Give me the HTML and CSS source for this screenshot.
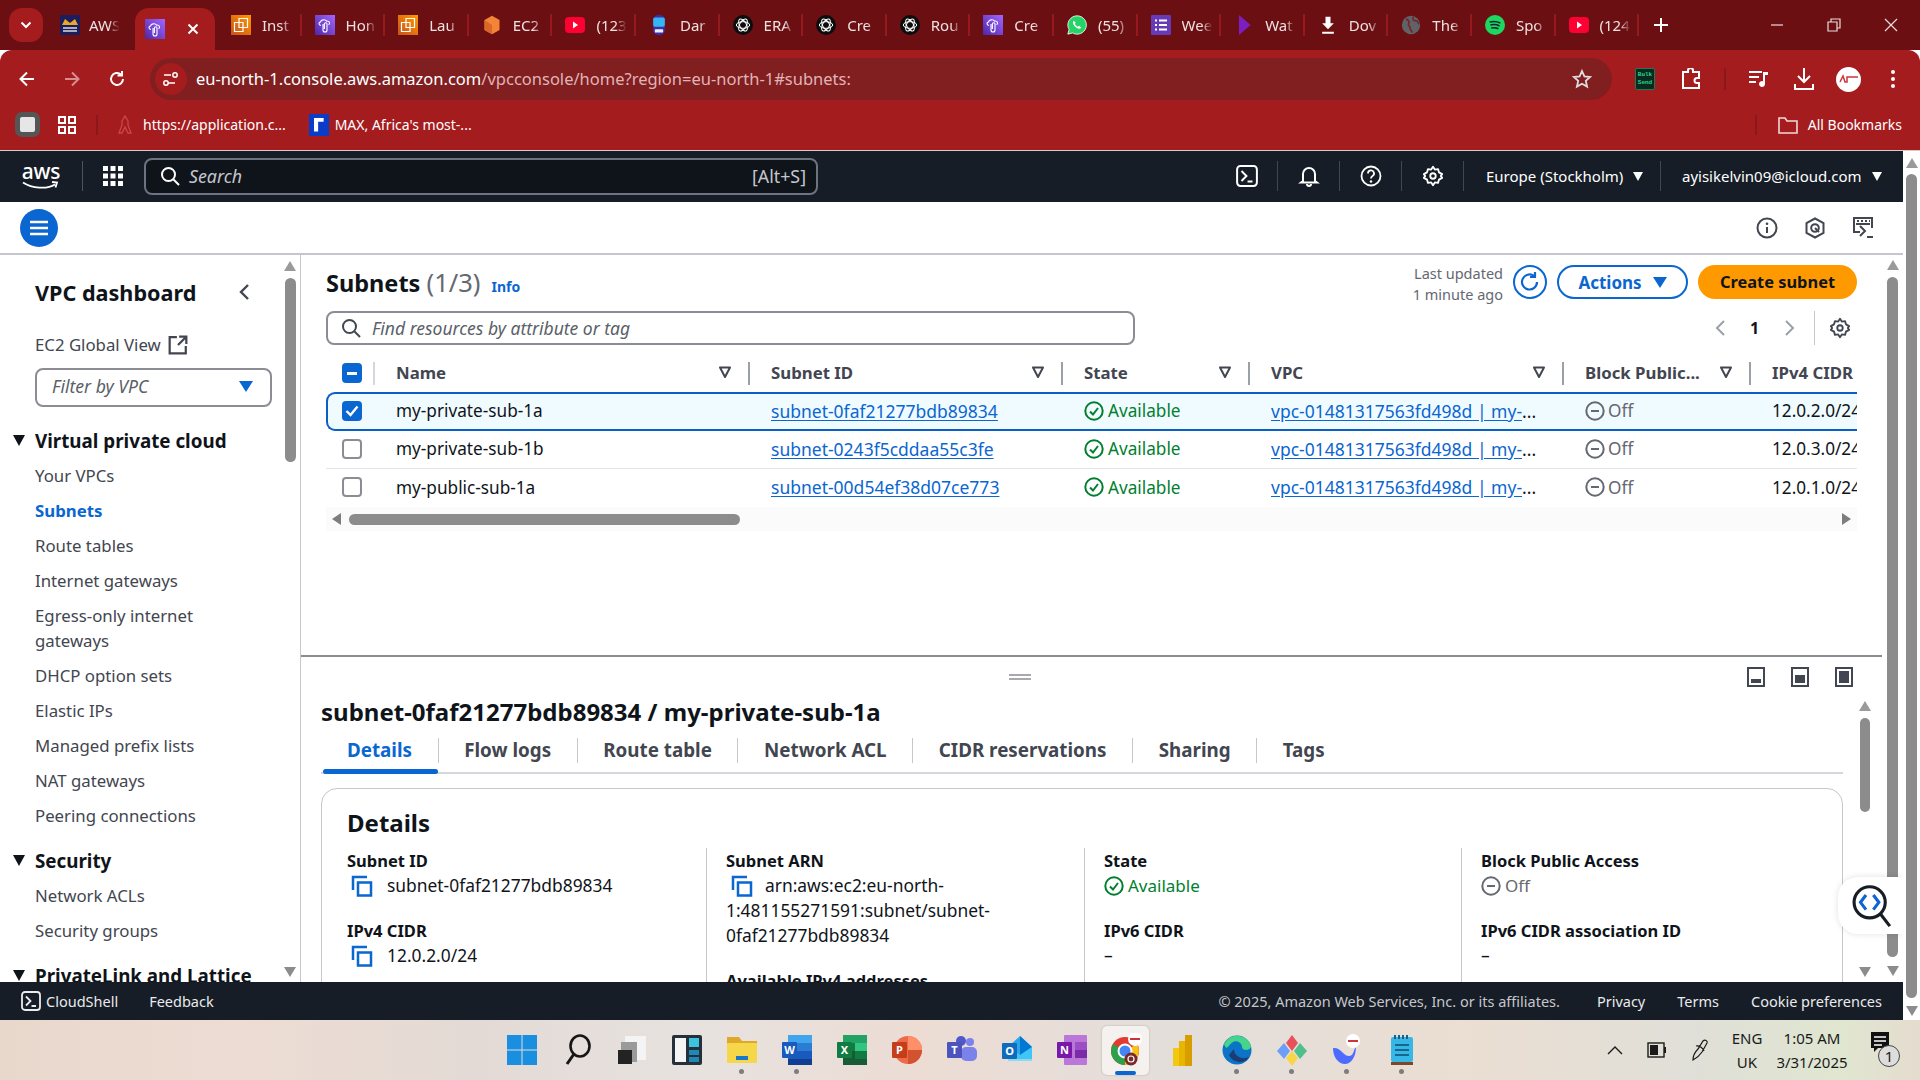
FILE: index.html
```html
<!DOCTYPE html>
<html lang="en">
<head>
<meta charset="utf-8">
<title>Subnets | VPC Console</title>
<link rel="stylesheet" href="styles.css">
</head>
<body>
<svg class="defs" aria-hidden="true">
  <defs>
    <linearGradient id="pg" x1="0" y1="1" x2="1" y2="0"><stop offset="0" stop-color="#4d27a8"/><stop offset="1" stop-color="#a166ff"/></linearGradient>
    <linearGradient id="og" x1="0" y1="1" x2="1" y2="0"><stop offset="0" stop-color="#c8511b"/><stop offset="1" stop-color="#ff9900"/></linearGradient>
    <symbol id="i-cloudapp" viewBox="0 0 20 20"><rect width="20" height="20" fill="url(#pg)"/><path d="M6 10.500c-2.400-.4-2.800-3-.4-3.600.3-2.200 4.600-3 6-.8 2.700-.3 4 2.300 2 3.800M8 9v6a2 2 0 0 0 4 0V9a1.300 1.300 0 0 0-2.600 0v5" fill="none" stroke="#fff" stroke-width="1.100"/></symbol>
    <symbol id="i-ec2app" viewBox="0 0 20 20"><rect width="20" height="20" fill="url(#og)"/><path d="M8 3.500h8.500v9H8zM3.500 7.500H12v9H3.500z" fill="none" stroke="#fff" stroke-width="1.200"/></symbol>
    <symbol id="i-yt" viewBox="0 0 20 20"><rect y="2" width="20" height="16" rx="4" fill="#ff0033"/><path d="M8 6.500v7l5-3.500z" fill="#fff"/></symbol>
    <symbol id="i-gpt" viewBox="0 0 24 24"><circle cx="12" cy="12" r="12" fill="#0d0d0d"/><g fill="none" stroke="#fff" stroke-width="1.200"><ellipse cx="12" cy="12" rx="8" ry="4"/><ellipse cx="12" cy="12" rx="8" ry="4" transform="rotate(60 12 12)"/><ellipse cx="12" cy="12" rx="8" ry="4" transform="rotate(120 12 12)"/></g></symbol>
    <symbol id="i-gear" viewBox="0 0 24 24"><g fill="none" stroke="currentColor" stroke-width="2"><circle cx="12" cy="12" r="3"/><path d="M12 2l2 3 3.500-.5 1 3.500L22 10l-1.500 2 1.500 2-3.500 2-1 3.500L14 19l-2 3-2-3-3.500.5-1-3.500L2 14l1.500-2L2 10l3.500-2 1-3.500L10 5z" stroke-linejoin="round"/></g></symbol>
    <symbol id="i-filter" viewBox="0 0 14 14"><path d="M2 2.500h10L7 12z" fill="none" stroke="currentColor" stroke-width="2" stroke-linejoin="round"/></symbol>
    <symbol id="i-ok" viewBox="0 0 20 20"><circle cx="10" cy="10" r="8.700" fill="none" stroke="currentColor" stroke-width="2"/><path d="M6 10.500l3 3 5-6.500" fill="none" stroke="currentColor" stroke-width="2"/></symbol>
    <symbol id="i-off" viewBox="0 0 20 20"><circle cx="10" cy="10" r="8.700" fill="none" stroke="currentColor" stroke-width="2"/><path d="M6 10h8" stroke="currentColor" stroke-width="2"/></symbol>
    <symbol id="i-copy" viewBox="0 0 22 22"><path d="M7 20.500V7.500h13v13z M2 15V2h14" fill="none" stroke="#0a66d0" stroke-width="2.500"/></symbol>
    <symbol id="i-shell" viewBox="0 0 20 20"><rect x="1" y="1" width="18" height="18" rx="3" fill="none" stroke="currentColor" stroke-width="1.800"/><path d="M5 5.500l4.500 4.500L5 14.500M10.500 15H15" fill="none" stroke="currentColor" stroke-width="1.800"/></symbol>
  </defs>
</svg>

<header class="tabstrip">
  <button class="tab-menu"><svg width="12" height="8" viewBox="0 0 12 8"><path d="M1.500 1.500L6 6l4.500-4.500" fill="none" stroke="#fff" stroke-width="2"/></svg></button>
  <div class="tab tab-first">
    <svg class="fav" viewBox="0 0 20 20"><rect width="20" height="20" fill="#1c1d5c"/><path d="M2 10l3-6 5 4 5-4 3 6z" fill="#e9a82a"/><path d="M3 13h14M3 16h14" stroke="#ddd" stroke-width="1.300"/></svg>
    <span class="tab-title">AWS</span>
  </div>
  <div class="tab tab-active">
    <svg class="fav"><use href="#i-cloudapp"/></svg>
    <svg class="tab-close" width="12" height="12" viewBox="0 0 12 12"><path d="M1.500 1.500l9 9m0-9l-9 9" stroke="#fff" stroke-width="2"/></svg>
  </div>
  <div class="tab"><svg class="fav"><use href="#i-ec2app"/></svg><span class="tab-title">Inst</span></div>
  <div class="tab"><svg class="fav"><use href="#i-cloudapp"/></svg><span class="tab-title">Hon</span></div>
  <div class="tab"><svg class="fav"><use href="#i-ec2app"/></svg><span class="tab-title">Lau</span></div>
  <div class="tab"><svg class="fav" viewBox="0 0 20 24"><path d="M10 1l9 5v12l-9 5-9-5V6z" fill="#f58536"/><path d="M10 12v11l-9-5V6z" fill="#d9672a"/></svg><span class="tab-title">EC2</span></div>
  <div class="tab"><svg class="fav" viewBox="0 0 20 20"><use href="#i-yt"/></svg><span class="tab-title">(123</span></div>
  <div class="tab"><svg class="fav" viewBox="0 0 20 24"><rect x="3" y="0" width="14" height="24" rx="6" fill="#3d2fa8"/><rect x="3" y="3" width="14" height="11" rx="2" fill="#35b5f2"/><rect x="5" y="17" width="10" height="4" rx="1" fill="#e8f0ff"/></svg><span class="tab-title">Dar</span></div>
  <div class="tab"><svg class="fav" viewBox="0 0 24 24"><use href="#i-gpt"/></svg><span class="tab-title">ERA</span></div>
  <div class="tab"><svg class="fav" viewBox="0 0 24 24"><use href="#i-gpt"/></svg><span class="tab-title">Cre</span></div>
  <div class="tab"><svg class="fav" viewBox="0 0 24 24"><use href="#i-gpt"/></svg><span class="tab-title">Rou</span></div>
  <div class="tab"><svg class="fav"><use href="#i-cloudapp"/></svg><span class="tab-title">Cre</span></div>
  <div class="tab"><svg class="fav" viewBox="0 0 24 24"><path d="M12 1a11 11 0 0 0-9.500 16.500L1 23l5.700-1.500A11 11 0 1 0 12 1z" fill="#25d366" stroke="#fff" stroke-width="1"/><path d="M8 7c-2 2 0 6 3 8s5 2 6 0l-2.500-2-1.500 1c-1.500-.5-3-2-3.500-3.500l1-1.500z" fill="#fff"/></svg><span class="tab-title">(55)</span></div>
  <div class="tab"><svg class="fav" viewBox="0 0 20 20"><rect width="20" height="20" rx="1" fill="#673ab7"/><path d="M8 5.500h8M8 10h8M8 14.500h8M4 5.500h2M4 10h2M4 14.500h2" stroke="#fff" stroke-width="1.800"/></svg><span class="tab-title">Wee</span></div>
  <div class="tab"><svg class="fav" viewBox="0 0 20 24"><path d="M4 0l14 12L4 24z" fill="#7b1fc0"/></svg><span class="tab-title">Wat</span></div>
  <div class="tab"><svg class="fav" viewBox="0 0 20 24"><path d="M7 2h6v8h4l-7 7-7-7h4zM3 20h14v2.500H3z" fill="#fff"/></svg><span class="tab-title">Dov</span></div>
  <div class="tab"><svg class="fav" viewBox="0 0 24 24"><circle cx="12" cy="12" r="11" fill="#5f6368"/><path d="M6 5c4 1 4 4 3 6s3 2 2 6l3 4M15 2c-2 3 0 5 3 5s2 3 4 4" fill="none" stroke="#7a2326" stroke-width="2"/></svg><span class="tab-title">The</span></div>
  <div class="tab"><svg class="fav" viewBox="0 0 24 24"><circle cx="12" cy="12" r="12" fill="#1ed760"/><path d="M5.500 8.500c4-1 9-.8 13 1.200M6.500 12c3.500-.8 7.500-.6 11 1.200M7.500 15.500c3-.6 6-.4 8.500 1" fill="none" stroke="#123" stroke-width="1.800"/></svg><span class="tab-title">Spo</span></div>
  <div class="tab"><svg class="fav" viewBox="0 0 20 20"><use href="#i-yt"/></svg><span class="tab-title">(124</span></div>
  <svg class="new-tab" width="16" height="16" viewBox="0 0 16 16"><path d="M8 1v14M1 8h14" stroke="#fff" stroke-width="2"/></svg>
  <div class="win-controls">
    <svg width="14" height="14" viewBox="0 0 14 14"><path d="M1 7h12" stroke="#e8dcdc" stroke-width="1.200"/></svg>
    <svg width="14" height="14" viewBox="0 0 14 14"><path d="M1 4h9v9H1zM4 4V1h9v9h-3" fill="none" stroke="#e8dcdc" stroke-width="1.200"/></svg>
    <svg width="14" height="14" viewBox="0 0 14 14"><path d="M1 1l12 12M13 1L1 13" stroke="#e8dcdc" stroke-width="1.200"/></svg>
  </div>
</header>

<nav class="toolbar">
  <div class="tool-nav">
    <svg width="18" height="18" viewBox="0 0 18 18"><path d="M16 9H3M9 2.500L2.500 9 9 15.500" fill="none" stroke="#fff" stroke-width="2"/></svg>
    <svg width="18" height="18" viewBox="0 0 18 18"><path d="M2 9h13M9 2.500L15.500 9 9 15.500" fill="none" stroke="#d98d8f" stroke-width="2"/></svg>
    <svg width="18" height="18" viewBox="0 0 18 18"><path d="M15 9a6 6 0 1 1-2-4.500M14 1v4.500H9.500" fill="none" stroke="#fff" stroke-width="2"/></svg>
  </div>
  <div class="omnibox">
    <span class="site-chip"><svg width="16" height="16" viewBox="0 0 16 16"><path d="M1 4h7M12 12H5" stroke="#fff" stroke-width="1.600"/><circle cx="12" cy="4" r="2.200" fill="none" stroke="#fff" stroke-width="1.500"/><circle cx="3" cy="12" r="2.200" fill="none" stroke="#fff" stroke-width="1.500"/></svg></span>
    <span class="url"><b>eu-north-1.console.aws.amazon.com</b>/vpcconsole/home?region=eu-north-1#subnets:</span>
    <svg class="star" width="20" height="20" viewBox="0 0 20 20"><path d="M10 2l2.400 5.400 5.800.6-4.400 3.900 1.300 5.700L10 14.700 4.900 17.600l1.300-5.700L1.800 8l5.800-.6z" fill="none" stroke="#ddd" stroke-width="1.800"/></svg>
  </div>
  <div class="tool-right">
    <span class="bulk">Bulk<br>Send</span>
    <svg class="t-puzzle" width="20" height="22" viewBox="0 0 20 22"><path d="M2 4h5V2.500a2.500 2.500 0 0 1 5 0V4h6v6h-2a2.500 2.500 0 0 0 0 5h2v5H2z" fill="none" stroke="#fff" stroke-width="2"/></svg>
    <span class="t-sep"></span>
    <svg class="t-media" width="22" height="20" viewBox="0 0 22 20"><path d="M1 3h13M1 8h10M1 13h7" stroke="#fff" stroke-width="2"/><path d="M15 3h5v3h-3v9a3 3 0 1 1-2-2.800z" fill="#fff"/></svg>
    <svg class="t-dl" width="22" height="24" viewBox="0 0 22 24"><path d="M11 1v13M5 9l6 6 6-6M2 17v5h18v-5" fill="none" stroke="#fff" stroke-width="2"/></svg>
    <span class="avatar"><svg width="20" height="10" viewBox="0 0 20 10"><path d="M1 8l3-6 2 6h2V3h11" fill="none" stroke="#d0343a" stroke-width="1.500"/></svg></span>
    <svg class="t-more" width="6" height="20" viewBox="0 0 6 20"><circle cx="3" cy="3" r="2" fill="#fff"/><circle cx="3" cy="10" r="2" fill="#fff"/><circle cx="3" cy="17" r="2" fill="#fff"/></svg>
  </div>
</nav>

<nav class="bookmarks">
  <span class="bm-square"><i></i></span>
  <svg class="bm-apps" width="18" height="18" viewBox="0 0 18 18"><path d="M1 1h6v6H1zM11 1h6v6h-6zM1 11h6v6H1zM11 11h6v6h-6z" fill="none" stroke="#fff" stroke-width="2"/></svg>
  <span class="bm-sep"></span>
  <svg class="bm-ic" width="20" height="20" viewBox="0 0 20 20"><path d="M10 1l3 5v4l3 8h-3l-3-6-3 6H4l3-8V6z" fill="none" stroke="#c8474b" stroke-width="1.300"/></svg>
  <span class="bm-text">https://application.c...</span>
  <span class="bm-max"><i></i></span>
  <span class="bm-text">MAX, Africa's most-...</span>
  <span class="bm-sep bm-sep-right"></span>
  <svg class="bm-folder" width="20" height="18" viewBox="0 0 20 18"><path d="M1 2h6l2 3h10v12H1z" fill="none" stroke="#f0d8d8" stroke-width="1.600"/></svg>
  <span class="bm-text">All Bookmarks</span>
</nav>

<div class="page">
  <div class="app">
    <div class="topnav">
      <span class="aws-logo"><span class="aws-word">aws</span><svg width="38" height="9" viewBox="0 0 38 9"><path d="M1 1.500c9 6 24 7 32 2M30 1l5 .5-1.500 5" fill="none" stroke="#fff" stroke-width="1.800"/></svg></span>
      <span class="nav-sep nav-sep-logo"></span>
      <svg class="nav-grid" width="20" height="20" viewBox="0 0 20 20"><path d="M0 0h5v5H0zM7.500 0h5v5h-5zM15 0h5v5h-5zM0 7.500h5v5H0zM7.500 7.500h5v5h-5zM15 7.500h5v5h-5zM0 15h5v5H0zM7.500 15h5v5h-5zM15 15h5v5h-5z" fill="#fff"/></svg>
      <div class="nav-search">
        <svg width="20" height="20" viewBox="0 0 20 20"><circle cx="8.500" cy="8.500" r="6.500" fill="none" stroke="#fff" stroke-width="2"/><path d="M13.500 13.500L19 19" stroke="#fff" stroke-width="2"/></svg>
        <span class="ns-ph">Search</span>
        <span class="ns-key">[Alt+S]</span>
      </div>
      <div class="nav-right">
        <span class="nav-ic"><svg width="22" height="22"><use href="#i-shell"/></svg></span>
        <span class="nav-ic"><svg width="22" height="22" viewBox="0 0 22 22"><path d="M5 16V9a6 6 0 0 1 12 0v7l2 1.500H3zM9 19a2 2 0 0 0 4 0" fill="none" stroke="#fff" stroke-width="2"/></svg></span>
        <span class="nav-ic"><svg width="22" height="22" viewBox="0 0 22 22"><circle cx="11" cy="11" r="9.500" fill="none" stroke="#fff" stroke-width="1.800"/><path d="M8 8.500a3 3 0 1 1 4.500 2.500c-1 .6-1.500 1-1.500 2.500" fill="none" stroke="#fff" stroke-width="1.800"/><circle cx="11" cy="16.500" r="1.200" fill="#fff"/></svg></span>
        <span class="nav-ic"><svg width="22" height="22"><use href="#i-gear"/></svg></span>
        <span class="nav-menu nav-region">Europe (Stockholm)<i class="tri"></i></span>
        <span class="nav-menu nav-user">ayisikelvin09@icloud.com<i class="tri"></i></span>
      </div>
    </div>

    <div class="subbar">
      <span class="burger"><svg width="18" height="16" viewBox="0 0 18 16"><path d="M0 2h18M0 8h18M0 14h18" stroke="#fff" stroke-width="2.400"/></svg></span>
      <div class="subbar-icons">
        <svg width="22" height="22" viewBox="0 0 22 22"><circle cx="11" cy="11" r="9.500" fill="none" stroke="#424650" stroke-width="2"/><path d="M11 10v6" stroke="#424650" stroke-width="2"/><circle cx="11" cy="6.800" r="1.300" fill="#424650"/></svg>
        <svg width="22" height="22" viewBox="0 0 22 22"><path d="M11 1.500l8.500 4.500v10L11 20.500 2.500 16V6z" fill="none" stroke="#424650" stroke-width="2"/><circle cx="11" cy="11" r="3.800" fill="none" stroke="#424650" stroke-width="2"/><path d="M11 11l4 4" stroke="#424650" stroke-width="2"/></svg>
        <svg width="22" height="24" viewBox="0 0 22 24"><path d="M8 16H2V2h18v10" fill="none" stroke="#424650" stroke-width="2"/><path d="M5 5h2M9 5h2M13 5h2M17 5h1M4 8h14" stroke="#424650" stroke-width="2"/><path d="M8 10l5 5-5 5" fill="none" stroke="#424650" stroke-width="2"/><path d="M15 21h6" stroke="#424650" stroke-width="2"/></svg>
      </div>
    </div>

    <div class="workspace">
      <aside class="sidebar">
        <div class="side-head"><h2>VPC dashboard</h2><svg width="12" height="18" viewBox="0 0 12 18"><path d="M10 2L3 9l7 7" fill="none" stroke="#424650" stroke-width="2.400"/></svg></div>
        <a class="side-global">EC2 Global View<svg width="20" height="20" viewBox="0 0 18 18"><path d="M8 2H1.500v14.500H16V10M10 1.500h6.500V8M16 2L9 9" fill="none" stroke="#424650" stroke-width="2"/></svg></a>
        <div class="side-filter"><span>Filter by VPC</span><i class="tri tri-blue"></i></div>
        <div class="side-group side-group-first"><i class="tri tri-dark"></i>Virtual private cloud</div>
        <a class="side-item">Your VPCs</a>
        <a class="side-item is-current">Subnets</a>
        <a class="side-item">Route tables</a>
        <a class="side-item">Internet gateways</a>
        <a class="side-item side-two">Egress-only internet gateways</a>
        <a class="side-item">DHCP option sets</a>
        <a class="side-item">Elastic IPs</a>
        <a class="side-item">Managed prefix lists</a>
        <a class="side-item">NAT gateways</a>
        <a class="side-item">Peering connections</a>
        <div class="side-group"><i class="tri tri-dark"></i>Security</div>
        <a class="side-item">Network ACLs</a>
        <a class="side-item">Security groups</a>
        <div class="side-group"><i class="tri tri-dark"></i>PrivateLink and Lattice</div>
      </aside>
      <div class="vbar vbar-side"><i class="arr arr-up"></i><i class="thumb thumb-side"></i><i class="arr arr-down arr-end"></i></div>

      <main class="content">
        <section class="list-pane">
          <div class="list-head">
            <h1>Subnets <span class="count">(1/3)</span><a class="info">Info</a></h1>
            <div class="list-actions">
              <span class="updated">Last updated<br>1 minute ago</span>
              <span class="refresh"><svg width="22" height="22" viewBox="0 0 22 22"><path d="M18 11a7.500 7.500 0 1 1-3-6M16 1v5h-5" fill="none" stroke="#0a66d0" stroke-width="2.200"/></svg></span>
              <button class="btn btn-outline">Actions<i class="tri tri-blue"></i></button>
              <button class="btn btn-primary">Create subnet</button>
            </div>
          </div>
          <div class="list-tools">
            <div class="find"><svg width="20" height="20" viewBox="0 0 20 20"><circle cx="8.500" cy="8.500" r="6.500" fill="none" stroke="#424650" stroke-width="2"/><path d="M13.500 13.500L19 19" stroke="#424650" stroke-width="2"/></svg><span>Find resources by attribute or tag</span></div>
            <div class="pager">
              <span class="pg"><svg width="12" height="18" viewBox="0 0 12 18"><path d="M10 2L3 9l7 7" fill="none" stroke="#9ba0a8" stroke-width="2"/></svg></span>
              <span class="pg pg-num">1</span>
              <span class="pg"><svg width="12" height="18" viewBox="0 0 12 18"><path d="M2 2l7 7-7 7" fill="none" stroke="#9ba0a8" stroke-width="2"/></svg></span>
              <span class="pg-gear"><svg width="22" height="22"><use href="#i-gear"/></svg></span>
            </div>
          </div>

          <div class="table">
            <div class="tr thead">
              <div class="th th-check"><i class="cb cb-mixed"></i></div>
              <div class="th">Name<svg class="flt"><use href="#i-filter"/></svg></div>
              <div class="th">Subnet ID<svg class="flt"><use href="#i-filter"/></svg></div>
              <div class="th">State<svg class="flt"><use href="#i-filter"/></svg></div>
              <div class="th">VPC<svg class="flt"><use href="#i-filter"/></svg></div>
              <div class="th">Block Public...<svg class="flt"><use href="#i-filter"/></svg></div>
              <div class="th th-last">IPv4 CIDR</div>
            </div>
            <div class="tr row row-sel">
              <div class="td td-check"><i class="cb cb-on"><svg width="14" height="12" viewBox="0 0 14 12"><path d="M1.500 6l4 4 7-8.500" fill="none" stroke="#fff" stroke-width="2.400"/></svg></i></div>
              <div class="td">my-private-sub-1a</div>
              <div class="td"><a class="lnk">subnet-0faf21277bdb89834</a></div>
              <div class="td st-ok"><svg width="20" height="20"><use href="#i-ok"/></svg>Available</div>
              <div class="td td-vpc"><a class="lnk">vpc-01481317563fd498d | my-</a>...</div>
              <div class="td st-off"><svg width="20" height="20"><use href="#i-off"/></svg>Off</div>
              <div class="td">12.0.2.0/24</div>
            </div>
            <div class="tr row row-line">
              <div class="td td-check"><i class="cb"></i></div>
              <div class="td">my-private-sub-1b</div>
              <div class="td"><a class="lnk">subnet-0243f5cddaa55c3fe</a></div>
              <div class="td st-ok"><svg width="20" height="20"><use href="#i-ok"/></svg>Available</div>
              <div class="td td-vpc"><a class="lnk">vpc-01481317563fd498d | my-</a>...</div>
              <div class="td st-off"><svg width="20" height="20"><use href="#i-off"/></svg>Off</div>
              <div class="td">12.0.3.0/24</div>
            </div>
            <div class="tr row">
              <div class="td td-check"><i class="cb"></i></div>
              <div class="td">my-public-sub-1a</div>
              <div class="td"><a class="lnk">subnet-00d54ef38d07ce773</a></div>
              <div class="td st-ok"><svg width="20" height="20"><use href="#i-ok"/></svg>Available</div>
              <div class="td td-vpc"><a class="lnk">vpc-01481317563fd498d | my-</a>...</div>
              <div class="td st-off"><svg width="20" height="20"><use href="#i-off"/></svg>Off</div>
              <div class="td">12.0.1.0/24</div>
            </div>
            <div class="hbar"><i class="arr arr-left"></i><i class="hthumb"></i><i class="arr arr-right"></i></div>
          </div>
        </section>

        <section class="split">
          <div class="split-handle">
            <svg class="grip" width="22" height="6" viewBox="0 0 22 6"><path d="M0 1h22M0 5h22" stroke="#8c8c94" stroke-width="1.500"/></svg>
            <div class="split-modes">
              <svg width="18" height="20" viewBox="0 0 18 20"><rect x="1" y="1" width="16" height="18" fill="none" stroke="#424650" stroke-width="2"/><rect x="4" y="12" width="10" height="4" fill="#424650"/></svg>
              <svg width="18" height="20" viewBox="0 0 18 20"><rect x="1" y="1" width="16" height="18" fill="none" stroke="#424650" stroke-width="2"/><rect x="4" y="8" width="10" height="8" fill="#424650"/></svg>
              <svg width="18" height="20" viewBox="0 0 18 20"><rect x="1" y="1" width="16" height="18" fill="none" stroke="#424650" stroke-width="2"/><rect x="4" y="4" width="10" height="12" fill="#424650"/></svg>
            </div>
          </div>
          <div class="split-body">
            <div class="split-main">
              <h2 class="split-title">subnet-0faf21277bdb89834 / my-private-sub-1a</h2>
              <div class="tabs">
                <a class="dtab dtab-on">Details</a>
                <a class="dtab">Flow logs</a>
                <a class="dtab">Route table</a>
                <a class="dtab">Network ACL</a>
                <a class="dtab">CIDR reservations</a>
                <a class="dtab">Sharing</a>
                <a class="dtab dtab-end">Tags</a>
              </div>
              <div class="card">
                <h3>Details</h3>
                <div class="kv-grid">
                  <div class="kv-col">
                    <div class="k">Subnet ID</div>
                    <div class="v"><svg width="22" height="22"><use href="#i-copy"/></svg>subnet-0faf21277bdb89834</div>
                    <div class="k k-next">IPv4 CIDR</div>
                    <div class="v"><svg width="22" height="22"><use href="#i-copy"/></svg>12.0.2.0/24</div>
                  </div>
                  <div class="kv-col">
                    <div class="k">Subnet ARN</div>
                    <div class="v v-wrap"><svg width="22" height="22"><use href="#i-copy"/></svg>arn:aws:ec2:eu-north-<br>1:481155271591:subnet/subnet-<br>0faf21277bdb89834</div>
                    <div class="k k-next">Available IPv4 addresses</div>
                  </div>
                  <div class="kv-col">
                    <div class="k">State</div>
                    <div class="v st-ok v-status"><svg width="20" height="20"><use href="#i-ok"/></svg>Available</div>
                    <div class="k k-next">IPv6 CIDR</div>
                    <div class="v">–</div>
                  </div>
                  <div class="kv-col">
                    <div class="k">Block Public Access</div>
                    <div class="v st-off v-status"><svg width="20" height="20"><use href="#i-off"/></svg>Off</div>
                    <div class="k k-next">IPv6 CIDR association ID</div>
                    <div class="v">–</div>
                  </div>
                </div>
              </div>
            </div>
            <div class="vbar vbar-split"><i class="arr arr-up"></i><i class="thumb thumb-split"></i><i class="arr arr-down arr-end"></i></div>
          </div>
        </section>
      </main>
      <div class="vbar vbar-main"><i class="arr arr-up"></i><i class="thumb thumb-main"></i><i class="arr arr-down"></i></div>
      <div class="q-float"><svg viewBox="0 0 44 48"><circle cx="20" cy="20" r="17" fill="#fff" stroke="#161d26" stroke-width="3.400"/><path d="M32 33l10 13" stroke="#161d26" stroke-width="3.400"/><path d="M16 12l-6 8 6 8" fill="none" stroke="#0a66d0" stroke-width="3.400"/><path d="M24 12l6 8-6 8" fill="none" stroke="#0a66d0" stroke-width="3.400"/></svg></div>
    </div>

    <footer class="foot">
      <span class="foot-shell"><svg width="20" height="20"><use href="#i-shell"/></svg>CloudShell</span>
      <span>Feedback</span>
      <span class="foot-copy">© 2025, Amazon Web Services, Inc. or its affiliates.</span>
      <span class="foot-strong">Privacy</span>
      <span class="foot-strong">Terms</span>
      <span class="foot-strong">Cookie preferences</span>
    </footer>
  </div>
  <div class="vbar vbar-page"><i class="arr arr-up"></i><i class="thumb thumb-page"></i><i class="arr arr-down"></i></div>
</div>

<footer class="taskbar">
  <div class="task-apps">
    <span class="ta"><svg width="30" height="30" viewBox="0 0 30 30"><path d="M0 0h14.500v14.500H0zM15.500 0H30v14.500H15.500zM0 15.500h14.500V30H0zM15.500 15.500H30V30H15.500z" fill="#1a8fe0"/></svg></span>
    <span class="ta"><svg width="30" height="32" viewBox="0 0 30 32"><ellipse cx="18" cy="12" rx="9.500" ry="10.500" fill="none" stroke="#161616" stroke-width="2.600"/><path d="M12 20L5 30" stroke="#161616" stroke-width="3"/></svg></span>
    <span class="ta"><svg width="30" height="30" viewBox="0 0 30 30"><rect x="8" y="1" width="21" height="24" fill="#f4f4f4"/><rect x="4" y="7" width="16" height="20" fill="#9a9a9a"/><path d="M1 15h14v14H1z" fill="#232323"/></svg></span>
    <span class="ta"><svg width="30" height="30" viewBox="0 0 30 30"><rect width="30" height="30" rx="2" fill="#26303a"/><rect x="3" y="3" width="11" height="24" fill="#f4f4f4"/><rect x="17" y="3" width="10" height="9" fill="#3cc3e0"/><rect x="17" y="15" width="10" height="5" fill="#1e88b8"/><rect x="17" y="22" width="10" height="5" fill="#1e88b8"/></svg></span>
    <span class="ta ta-dot"><svg width="30" height="30" viewBox="0 0 30 30"><path d="M0 2h12l3 4h15v6H0z" fill="#e0a82a"/><rect y="8" width="30" height="20" rx="1" fill="#f7d74a"/><rect x="9" y="21" width="12" height="4" fill="#1a78c8"/></svg></span>
    <span class="ta ta-dot"><svg width="30" height="30" viewBox="0 0 30 30"><rect x="6" width="24" height="8" fill="#41a5ee"/><rect x="6" y="8" width="24" height="8" fill="#2b7cd3"/><rect x="6" y="16" width="24" height="8" fill="#185abd"/><rect x="6" y="24" width="24" height="6" fill="#103f91"/><rect y="7" width="15" height="16" rx="1" fill="#185abd"/><text x="7.500" y="19" class="ta-letter">W</text></svg></span>
    <span class="ta"><svg width="30" height="30" viewBox="0 0 30 30"><rect x="6" width="24" height="8" fill="#21a366"/><rect x="6" y="8" width="12" height="8" fill="#107c41"/><rect x="18" y="8" width="12" height="8" fill="#33c481"/><rect x="6" y="16" width="12" height="8" fill="#185c37"/><rect x="18" y="16" width="12" height="8" fill="#107c41"/><rect x="6" y="24" width="24" height="6" fill="#185c37"/><rect y="7" width="15" height="16" rx="1" fill="#107c41"/><text x="7.500" y="19" class="ta-letter">X</text></svg></span>
    <span class="ta"><svg width="30" height="30" viewBox="0 0 30 30"><circle cx="16" cy="15" r="14" fill="#ed6c47"/><path d="M16 1a14 14 0 0 1 14 14H16z" fill="#ff8f6b"/><path d="M16 15h14a14 14 0 0 1-14 14z" fill="#d35230"/><rect y="7" width="15" height="16" rx="1" fill="#c43e1c"/><text x="7.500" y="19" class="ta-letter">P</text></svg></span>
    <span class="ta"><svg width="30" height="30" viewBox="0 0 30 30"><circle cx="23" cy="7" r="4" fill="#7b83eb"/><rect x="14" y="12" width="16" height="14" rx="5" fill="#7b83eb"/><circle cx="14" cy="6" r="5" fill="#5059c9"/><rect y="7" width="15" height="16" rx="1" fill="#4b53bc"/><text x="7.500" y="19" class="ta-letter">T</text></svg></span>
    <span class="ta"><svg width="30" height="30" viewBox="0 0 30 30"><path d="M6 12l12-11 12 11v12H6z" fill="#28a8ea"/><path d="M18 1l12 11-12 8z" fill="#0078d4"/><path d="M6 12l12 8 12-8v14H6z" fill="#50d9ff" opacity=".6"/><rect y="8" width="15" height="16" rx="1" fill="#0f6cbd"/><text x="7.500" y="20" class="ta-letter">O</text></svg></span>
    <span class="ta"><svg width="30" height="30" viewBox="0 0 30 30"><rect x="7" width="23" height="30" rx="1" fill="#ba77d8"/><rect x="18" y="7" width="12" height="8" fill="#9c4fc4"/><rect x="18" y="15" width="12" height="8" fill="#7b2aa8"/><rect y="7" width="15" height="16" rx="1" fill="#7719aa"/><text x="7.500" y="19" class="ta-letter">N</text></svg></span>
    <span class="ta ta-active"><svg width="32" height="34" viewBox="0 0 32 34"><circle cx="14" cy="18" r="14" fill="#e33b2e"/><path d="M14 18L2 11a14 14 0 0 0 12 21z" fill="#2ba14b"/><path d="M14 18l12-7a14 14 0 0 1-12 21z" fill="#f7c31a"/><circle cx="14" cy="18" r="6.500" fill="#4285f4" stroke="#fff" stroke-width="2"/><circle cx="24" cy="6" r="7" fill="#fff"/><path d="M19 6h10" stroke="#d0343a" stroke-width="2"/><circle cx="20" cy="26" r="6.500" fill="#7a2a2a"/><circle cx="20" cy="26" r="3" fill="none" stroke="#fff" stroke-width="1.200"/></svg></span>
    <span class="ta"><svg width="30" height="32" viewBox="0 0 30 32"><rect x="6" y="14" width="7" height="18" fill="#f2c811"/><rect x="12" y="7" width="7" height="25" fill="#e8b600"/><rect x="18" y="1" width="7" height="31" fill="#d89e00"/></svg></span>
    <span class="ta ta-dot"><svg width="30" height="32" viewBox="0 0 30 32"><circle cx="15" cy="16" r="14.500" fill="#0c74c6"/><path d="M2 10a14.500 14.500 0 0 1 27 2c0 5-9 5-9 1 0-4-5-7-9-5-5 3-6 10-9 2z" fill="#46d48a"/><path d="M12 15c0 8 9 11 15 8-3 6-15 8-20-2" fill="#1b3c74"/></svg></span>
    <span class="ta ta-dot"><svg width="30" height="32" viewBox="0 0 30 32"><path d="M15 1l6 8-6 8-6-8z" fill="#e8505b"/><path d="M23 9l7 8-7 8-6-8z" fill="#4fc08d"/><path d="M7 9l6 8-6 8-7-8z" fill="#6c9ef8"/><path d="M15 17l6 7-6 8-6-8z" fill="#f7d74a"/></svg></span>
    <span class="ta ta-dot"><svg width="32" height="32" viewBox="0 0 32 32"><path d="M2 14c8-1 10 8 16 8 5 0 4-6 7-9 0 10-5 17-11 17S2 24 2 14z" fill="#4d6bfe"/><circle cx="22" cy="7" r="7" fill="#fff"/><path d="M17 7h10" stroke="#d0343a" stroke-width="2"/></svg></span>
    <span class="ta ta-dot"><svg width="26" height="32" viewBox="0 0 26 32"><rect x="2" y="3" width="22" height="25" rx="2" fill="#35b7e8"/><rect x="2" y="28" width="22" height="3" fill="#7a4a28"/><path d="M6 1v4M10 1v4M14 1v4M18 1v4" stroke="#1a5f8a" stroke-width="2"/><path d="M6 11h14M6 16h14M6 21h14" stroke="#124c6c" stroke-width="1.600"/></svg></span>
  </div>
  <div class="tray">
    <svg class="tr-up" width="16" height="10" viewBox="0 0 16 10"><path d="M1 9l7-7 7 7" fill="none" stroke="#1a1a1a" stroke-width="1.400"/></svg>
    <svg class="tr-bat" width="20" height="16" viewBox="0 0 20 16"><rect x="1" y="1" width="16" height="14" fill="none" stroke="#1a1a1a" stroke-width="1.400"/><rect x="3" y="3" width="8" height="10" fill="#1a1a1a"/><rect x="17" y="5" width="2" height="6" fill="#1a1a1a"/></svg>
    <svg class="tr-pen" width="20" height="24" viewBox="0 0 20 24"><path d="M2 22c0-4 2-8 5-11l5-8c2-2 5 0 4 2l-5 9c-2 3-5 6-9 8zM5 8c3-1 7 2 8 5" fill="none" stroke="#1a1a1a" stroke-width="1.200"/></svg>
    <span class="tr-lang">ENG<br>UK</span>
    <span class="tr-time">1:05 AM<br>3/31/2025</span>
    <span class="tr-note"><svg width="20" height="22" viewBox="0 0 20 22"><path d="M1 1h18v16H8l-4 4v-4H1z" fill="#111"/><path d="M4 6h12M4 10h12M4 14h8" stroke="#fff" stroke-width="1.400"/></svg><b class="tr-badge">1</b></span>
  </div>
</footer>
</body>
</html>
```
FILE: styles.css
```css
* { box-sizing: border-box; }
html, body { margin: 0; padding: 0; }
body {
  width: 1920px;
  height: 1080px;
  overflow: hidden;
  font-family: "Noto Sans", "Open Sans", sans-serif;
  color: #0f141a;
  background: #fff;
  display: flex;
  flex-direction: column;
}
i { display: block; font-style: normal; }
a { color: inherit; text-decoration: none; }
h1, h2, h3 { margin: 0; }
button { font: inherit; border: 0; padding: 0; }
.defs { display: block; width: 0; height: 0; overflow: hidden; }

/* Browser tab strip */
.tabstrip {
  height: 50px;
  flex: none;
  display: flex;
  align-items: center;
  padding-left: 9px;
  background: #6c0f13;
  color: #ede2e2;
  font-size: 15px;
}
.tab-menu {
  width: 34px;
  height: 34px;
  border-radius: 13px;
  background: #a51c1f;
  display: flex;
  align-items: center;
  justify-content: center;
  margin-right: 6px;
  flex: none;
}
.tab {
  width: 83.6px;
  height: 22px;
  flex: none;
  display: flex;
  align-items: center;
  gap: 11px;
  padding-left: 13px;
  border-right: 2px solid #96191d;
}
.tab-first { width: 86px; padding-left: 11px; border-right: 0; gap: 9px; }
.tab-active {
  width: 80px;
  height: 42px;
  align-self: flex-end;
  margin-right: 3px;
  padding-left: 10px;
  background: #a51c1f;
  border: 0;
  border-radius: 14px 14px 0 0;
  gap: 22px;
}
.fav { width: 20px; height: 20px; flex: none; }
.tab-title {
  width: 36px;
  white-space: nowrap;
  -webkit-mask-image: linear-gradient(90deg, #000 55%, transparent 85%);
  mask-image: linear-gradient(90deg, #000 55%, transparent 85%);
}
.new-tab { margin-left: 14px; flex: none; }
.win-controls {
  margin-left: auto;
  width: 150px;
  display: flex;
  justify-content: space-between;
  padding: 0 22px 0 0;
  flex: none;
}

/* Browser toolbar */
.toolbar {
  height: 58px;
  flex: none;
  display: flex;
  align-items: center;
  background: #a51c1f;
  border-radius: 12px 12px 0 0;
  color: #fff;
}
.tool-nav {
  width: 150px;
  flex: none;
  display: flex;
  gap: 27px;
  padding-left: 18px;
  align-items: center;
}
.omnibox {
  width: 1462px;
  height: 42px;
  flex: none;
  display: flex;
  align-items: center;
  background: #801e20;
  border-radius: 21px;
  padding: 0 20px 0 5px;
}
.site-chip {
  width: 32px;
  height: 32px;
  border-radius: 50%;
  background: #a51c1f;
  display: flex;
  align-items: center;
  justify-content: center;
  flex: none;
}
.url { margin-left: 9px; padding-bottom: 2px; font-size: 16.500px; color: #e0b4b5; white-space: nowrap; }
.url b { font-weight: 400; color: #fff; }
.star { margin-left: auto; }
.tool-right { flex: 1; display: flex; align-items: center; }
.bulk {
  width: 20px;
  height: 22px;
  margin-left: 23px;
  background: #0a2a1f;
  border: 1px solid #1c7a55;
  border-radius: 2px;
  color: #27d88e;
  font: 700 6px/8px "Liberation Mono", monospace;
  text-align: center;
  padding-top: 2px;
  flex: none;
}
.t-puzzle { margin-left: 26px; flex: none; }
.t-sep { width: 2px; height: 22px; background: #8a181b; margin-left: 23px; flex: none; }
.t-media { margin-left: 22px; flex: none; }
.t-dl { margin-left: 23px; flex: none; }
.avatar {
  width: 25px;
  height: 25px;
  margin-left: 21px;
  background: #fff;
  border-radius: 50%;
  display: flex;
  align-items: center;
  justify-content: center;
  flex: none;
}
.t-more { margin-left: 29px; flex: none; }

/* Bookmarks bar */
.bookmarks {
  height: 42px;
  flex: none;
  display: flex;
  align-items: center;
  background: #a51c1f;
  color: #fff;
  font-size: 14px;
  padding: 0 0 9px 15px;
}
.bm-square {
  width: 25px;
  height: 25px;
  background: #555;
  border-radius: 7px;
  padding: 5px;
  flex: none;
}
.bm-square i { width: 15px; height: 15px; background: #e6e6e6; border-radius: 2px; }
.bm-apps { margin-left: 18px; flex: none; }
.bm-sep { width: 2px; height: 20px; background: #8a181b; margin-left: 20px; flex: none; }
.bm-ic { margin-left: 17px; flex: none; }
.bm-text { margin-left: 8px; white-space: nowrap; }
.bm-max {
  width: 20px;
  height: 22px;
  background: #0a3cc8;
  margin-left: 23px;
  margin-right: -2px;
  flex: none;
  padding: 4px 5px;
}
.bm-max i { width: 10px; height: 14px; background: #fff; clip-path: polygon(0 0, 100% 0, 100% 30%, 45% 30%, 45% 100%, 0 100%); }
.bm-sep-right { margin-left: auto; }
.bm-folder { margin-left: 21px; flex: none; }
.bm-folder + .bm-text { margin-left: 10px; margin-right: 18px; }

/* Page */
.page {
  flex: 1;
  min-height: 0;
  display: flex;
  border-top: 1px solid #d8c8c8;
}
.app {
  width: 1903px;
  flex: none;
  display: flex;
  flex-direction: column;
  min-height: 0;
}

/* Console nav */
.topnav {
  height: 51px;
  flex: none;
  background: #161d26;
  display: flex;
  align-items: center;
  color: #fff;
  padding: 0 0 1px 21px;
}
.aws-logo { width: 40px; display: flex; flex-direction: column; align-items: center; flex: none; margin-top: -2px; }
.aws-word { font-size: 21px; line-height: 21px; font-weight: 500; letter-spacing: -.3px; }
.aws-logo svg { margin-top: -1px; }
.nav-sep-logo { width: 1px; height: 30px; background: #4a5563; margin-left: 21px; flex: none; }
.nav-grid { margin-left: 20px; flex: none; }
.nav-search {
  width: 674px;
  height: 37px;
  margin-left: 21px;
  border: 2px solid #6b7480;
  border-radius: 8px;
  background: #0f141a;
  display: flex;
  align-items: center;
  padding: 0 10px 0 14px;
  flex: none;
}
.ns-ph { margin-left: 9px; font-style: italic; font-size: 17.800px; color: #c6c6cd; }
.ns-key { margin-left: auto; font-size: 17.800px; color: #c6c6cd; }
.nav-right { margin-left: auto; display: flex; align-items: center; height: 100%; font-size: 15px; }
.nav-ic {
  width: 62px;
  height: 30px;
  border-right: 1px solid #424650;
  display: flex;
  align-items: center;
  justify-content: center;
}
.nav-menu { display: flex; align-items: center; gap: 10px; white-space: nowrap; height: 30px; padding-left: 22px; }
.nav-region { width: 197px; border-right: 1px solid #424650; }
.nav-user { width: 242px; padding-left: 21px; }
.tri {
  width: 0;
  height: 0;
  border-left: 5.500px solid transparent;
  border-right: 5.500px solid transparent;
  border-top: 9px solid currentColor;
  flex: none;
}
.tri-blue { color: #0a66d0; border-left-width: 7px; border-right-width: 7px; border-top-width: 11px; }
.tri-dark { color: #0f141a; border-left-width: 6.500px; border-right-width: 6.500px; border-top-width: 11px; }

/* Sub bar */
.subbar {
  height: 53px;
  flex: none;
  display: flex;
  align-items: center;
  border-bottom: 2px solid #c6c6cd;
  padding-left: 20px;
}
.burger {
  width: 38px;
  height: 38px;
  background: #0a66d0;
  border-radius: 50%;
  display: flex;
  align-items: center;
  justify-content: center;
}
.subbar-icons { margin-left: auto; margin-right: 29px; display: flex; gap: 26px; align-items: center; }

/* Workspace */
.workspace { flex: 1; min-height: 0; display: flex; position: relative; overflow: hidden; }
.sidebar {
  width: 280px;
  flex: none;
  padding: 17px 0 0 35px;
  overflow: hidden;
  font-size: 16.800px;
  color: #424650;
}
.side-head {
  height: 40px;
  display: flex;
  align-items: center;
  justify-content: space-between;
  width: 215px;
}
.side-head h2 { font-size: 21.600px; font-weight: 700; color: #0f141a; }
.side-global { display: flex; align-items: center; gap: 7px; height: 35px; margin-top: 15px; }
.side-filter {
  width: 237px;
  height: 39px;
  margin-top: 6px;
  border: 2px solid #8c8c94;
  border-radius: 8px;
  padding: 0 17px 3px 15px;
  display: flex;
  align-items: center;
  justify-content: space-between;
  font-style: italic;
  font-size: 17.600px;
  color: #5a5f68;
}
.side-group {
  height: 35px;
  display: flex;
  align-items: center;
  margin: 10px 0 0 -22px;
  gap: 10px;
  font-size: 18.800px;
  font-weight: 700;
  color: #0f141a;
  white-space: nowrap;
}
.side-group-first { margin-top: 16px; }
.side-item { display: flex; align-items: center; height: 35px; white-space: nowrap; }
.side-two { height: 60px; width: 200px; white-space: normal; line-height: 25px; }
.is-current { color: #0a66d0; font-weight: 700; }

.vbar { display: flex; flex-direction: column; align-items: center; flex: none; }
.vbar-side { padding-top: 6px; border-right: 1px solid #c6c6cd; width: 21px; }
.arr { width: 0; height: 0; flex: none; }
.arr-up { border-left: 6px solid transparent; border-right: 6px solid transparent; border-bottom: 10px solid #9a9a9a; }
.arr-down { border-left: 6px solid transparent; border-right: 6px solid transparent; border-top: 10px solid #8c8c8c; }
.arr-left { border-top: 6px solid transparent; border-bottom: 6px solid transparent; border-right: 9px solid #7d7d7d; }
.arr-right { border-top: 6px solid transparent; border-bottom: 6px solid transparent; border-left: 9px solid #7d7d7d; }
.thumb { width: 11px; background: #8c8c8c; border-radius: 6px; flex: none; margin-top: 7px; }
.arr-end { margin-top: auto; margin-bottom: 5px; }
.thumb-side { height: 184px; }
.thumb-main { height: 680px; }
.thumb-split { height: 94px; width: 10px; }
.thumb-page { height: 824px; margin-top: 6px; }
.vbar-main { width: 21px; padding-top: 5px; }
.vbar-main .arr-down { margin-top: 9px; }
.vbar-page { width: 17px; padding-top: 7px; background: #fff; }
.vbar-page .arr-down { margin-top: 8px; }
.vbar-split { width: 35px; padding-top: 4px; margin-left: auto; }

/* Content */
.content { width: 1581px; flex: none; display: flex; flex-direction: column; min-height: 0; }
.list-pane { height: 400px; flex: none; padding: 10px 25px 0; overflow: hidden; }
.list-head { display: flex; align-items: center; justify-content: space-between; height: 34px; }
.list-head h1 { font-size: 23.500px; font-weight: 700; white-space: nowrap; }
.count { font-weight: 400; color: #656871; font-size: 25.500px; }
.info { font-size: 14px; color: #0a66d0; margin-left: 11px; }
.list-actions { display: flex; align-items: center; gap: 10px; }
.updated { font-size: 14.500px; line-height: 21px; padding-top: 3px; color: #656871; text-align: right; }
.refresh {
  width: 34px;
  height: 34px;
  border: 2px solid #0a66d0;
  border-radius: 50%;
  display: flex;
  align-items: center;
  justify-content: center;
}
.btn {
  height: 34px;
  border-radius: 17px;
  font-size: 17px;
  font-weight: 700;
  display: flex;
  align-items: center;
  justify-content: center;
  gap: 11px;
  padding-bottom: 2px;
}
.btn-outline { width: 131px; background: #fff; border: 2px solid #0a66d0; color: #0a66d0; padding-bottom: 0; }
.btn-primary { width: 159px; background: #ff9900; color: #0f141a; font-size: 16.400px; }
.list-tools { display: flex; align-items: center; margin-top: 12px; height: 34px; }
.find {
  width: 809px;
  height: 34px;
  border: 2px solid #8c8c94;
  border-radius: 8px;
  display: flex;
  align-items: center;
  gap: 11px;
  padding: 0 0 1px 13px;
  font-size: 17.500px;
  font-style: italic;
  color: #5a5f68;
}
.pager { margin-left: auto; display: flex; align-items: center; height: 34px; color: #424650; }
.pg { width: 35px; display: flex; justify-content: center; }
.pg-num { font-weight: 700; font-size: 16px; color: #0f141a; }
.pg-gear {
  width: 43px;
  height: 34px;
  margin-left: 7px;
  padding-left: 7px;
  border-left: 1px solid #c6c6cd;
  display: flex;
  align-items: center;
  justify-content: center;
}

/* Table */
.table { margin-top: 9px; font-size: 17.200px; overflow: hidden; }
.tr {
  display: grid;
  grid-template-columns: 49px 375px 313px 187px 314px 187px 106px;
  align-items: center;
}
.thead { height: 38px; color: #424650; font-weight: 700; font-size: 16.800px; }
.th {
  height: 23px;
  padding: 0 16px 2px 21px;
  display: flex;
  align-items: center;
  justify-content: space-between;
  border-right: 2px solid #9ba0a8;
  white-space: nowrap;
}
.th-check { padding: 0 0 0 16px; border-right-color: #d5d7dc; }
.th-last { border: 0; padding-right: 0; }
.flt { width: 14px; height: 14px; flex: none; color: #424650; }
.row { height: 38px; }
.row-sel {
  height: 39px;
  grid-template-columns: 47px 375px 313px 187px 314px 187px 106px;
  background: #f0fbff;
  border: 2px solid #0a5fc4;
  border-right: 0;
  border-radius: 9px 0 0 9px;
}
.row-sel .td-check { padding-left: 14px; }
.row-line { border-bottom: 1px solid #e4e5e8; }
.td { padding: 0 0 2px 21px; white-space: nowrap; overflow: hidden; display: flex; align-items: center; }
.td-check { padding-left: 16px; }
.td-vpc { font-size: 17.500px; }
.cb {
  width: 20px;
  height: 20px;
  border: 2px solid #8c8c94;
  border-radius: 4px;
  background: #fff;
  display: flex;
  align-items: center;
  justify-content: center;
}
.cb-on, .cb-mixed { border: 0; background: #0a66d0; }
.cb-mixed::after { content: ""; width: 10px; height: 3px; background: #fff; }
.lnk { color: #0a66d0; text-decoration: underline; text-underline-offset: 2px; font-size: 17.500px; }
.st-ok { color: #00802f; gap: 4px; }
.st-off { color: #656871; gap: 3px; }
.hbar {
  height: 24px;
  background: #fbfbfb;
  display: flex;
  align-items: center;
  padding: 0 6px;
}
.hthumb { width: 391px; height: 11px; background: #8c8c8c; border-radius: 6px; margin-left: 8px; }
.arr-right { margin-left: auto; }

/* Split panel */
.split { flex: 1; min-height: 0; border-top: 2px solid #8c8c94; display: flex; flex-direction: column; overflow: hidden; }
.split-handle { height: 40px; flex: none; display: flex; align-items: center; padding-right: 29px; }
.grip { margin-left: 708px; flex: none; }
.split-modes { margin-left: auto; display: flex; gap: 26px; }
.split-body { flex: 1; min-height: 0; display: flex; overflow: hidden; }
.split-main { width: 1542px; flex: none; padding-left: 20px; }
.split-title { font-size: 24px; font-weight: 700; line-height: 32px; white-space: nowrap; margin-top: -1px; margin-bottom: 1px; }
.tabs { height: 45px; display: flex; align-items: center; border-bottom: 2px solid #d5d7dc; position: relative; }
.dtab {
  height: 25px;
  display: flex;
  align-items: center;
  font-size: 18.800px;
  font-weight: 700;
  color: #424650;
  padding: 0 25.600px 2px;
  border-right: 1px solid #c6c6cd;
  white-space: nowrap;
}
.dtab-end { border: 0; }
.dtab-on { color: #0a66d0; position: relative; padding-left: 24px; margin-left: 2px; }
.dtab-on::after { content: ""; position: absolute; left: 0; right: 0; top: 31px; height: 5px; background: #0a66d0; border-radius: 3px; }
.card {
  margin-top: 14px;
  height: 260px;
  border: 1px solid #c6c6cd;
  border-radius: 16px;
  padding: 18px 0 0 25px;
}
.card h3 { font-size: 24px; font-weight: 700; line-height: 32px; }
.kv-grid { display: grid; grid-template-columns: 359px 378px 377px 1fr; margin-top: 9px; font-size: 16.500px; line-height: 25px; }
.kv-col { border-left: 1px solid #c6c6cd; padding-left: 19px; height: 200px; }
.kv-col:first-child { border: 0; padding-left: 0; }
.k { font-weight: 700; height: 25px; white-space: nowrap; }
.k-next { margin-top: 20px; }
.v { display: flex; align-items: center; gap: 14px; height: 25px; color: #0f141a; font-size: 17.400px; }
.v svg { flex: none; margin-left: 4px; }
.v-wrap { display: block; height: auto; }
.v-wrap svg { vertical-align: -5px; margin: 0 12px 0 5px; }
.v-status { gap: 4px; font-size: 17px; }
.v-status.st-ok { color: #00802f; }
.v-status.st-off { color: #656871; }
.v-status svg { margin-left: 0; }

/* Floating button */
.q-float {
  position: absolute;
  right: 0;
  top: 622px;
  width: 65px;
  height: 57px;
  background: #fff;
  border-radius: 20px 0 0 20px;
  box-shadow: 0 0 6px rgba(0, 0, 0, .12);
  display: flex;
  align-items: center;
  padding-left: 13px;
}
.q-float svg { width: 41px; height: 44px; }

/* Console footer */
.foot {
  height: 38px;
  flex: none;
  background: #161d26;
  color: #e9ebed;
  font-size: 14.500px;
  display: flex;
  align-items: center;
  padding: 0 21px;
}
.foot-shell { display: flex; align-items: center; gap: 5px; margin-right: 31px; }
.foot-copy { margin-left: auto; color: #c6c6cd; margin-right: 37px; }
.foot-strong { margin-right: 32px; }
.foot-strong:last-child { margin-right: 0; }

/* Taskbar */
.taskbar {
  height: 60px;
  flex: none;
  display: flex;
  align-items: center;
  padding-left: 494px;
  background: linear-gradient(90deg, #e8d8cc, #eddcd3 12%, #e3dad5 25%, #e7e2df 36%, #ecdcd4 48%, #e3dedb 62%, #ebded2 76%, #e0dfd8 88%, #e0e6d0 96%, #e5dccf);
}
.task-apps { display: flex; align-items: center; height: 100%; }
.ta {
  width: 55px;
  height: 100%;
  display: flex;
  align-items: center;
  justify-content: center;
  position: relative;
}
.ta-dot::after {
  content: "";
  position: absolute;
  left: 25px;
  bottom: 6px;
  width: 5px;
  height: 5px;
  border-radius: 50%;
  background: #7d7d7d;
}
.ta-active::before {
  content: "";
  position: absolute;
  left: 3px;
  right: 5px;
  top: 6px;
  bottom: 5px;
  border-radius: 5px;
  background: #f5f1ee;
  box-shadow: 0 0 2px rgba(0, 0, 0, .25);
}
.ta-active::after {
  content: "";
  position: absolute;
  left: 16px;
  bottom: 5px;
  width: 21px;
  height: 4px;
  border-radius: 2px;
  background: #0a66d0;
}
.ta-active svg { position: relative; }
.ta-letter { font: 700 11px "Noto Sans", sans-serif; fill: #fff; text-anchor: middle; }
.tray { margin-left: auto; display: flex; align-items: center; height: 100%; font-size: 15px; color: #1a1a1a; padding-right: 20px; }
.tr-up { margin-right: 24px; flex: none; }
.tr-bat { margin-right: 24px; flex: none; }
.tr-pen { margin-right: 19px; flex: none; }
.tr-lang { text-align: center; line-height: 24px; width: 34px; }
.tr-time { text-align: center; line-height: 24px; margin-left: 8px; width: 80px; white-space: nowrap; }
.tr-note { margin-left: 18px; position: relative; display: block; width: 30px; height: 38px; }
.tr-badge {
  position: absolute;
  left: 8px;
  top: 14px;
  width: 22px;
  height: 22px;
  border-radius: 50%;
  border: 1px solid #444;
  background: #ddd;
  font-weight: 400;
  font-size: 15px;
  line-height: 20px;
  text-align: center;
}
```
